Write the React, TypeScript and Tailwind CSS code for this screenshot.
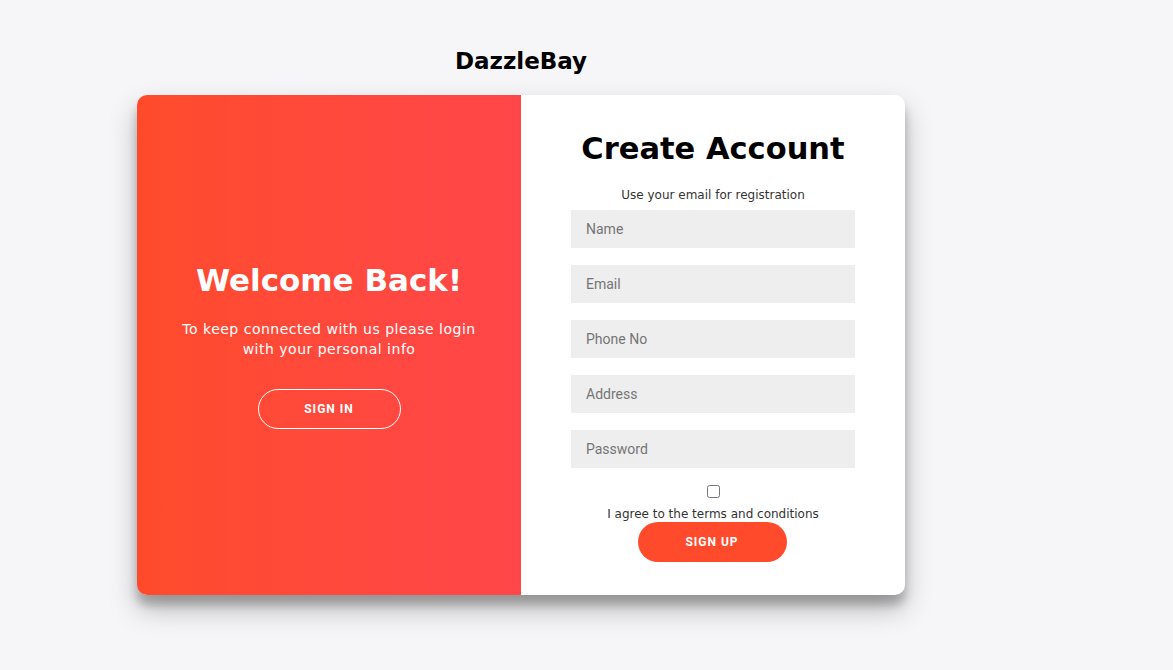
import { useState } from "react";

const fields = ["Name", "Email", "Phone No", "Address", "Password"];

export default function App() {
  const [agree, setAgree] = useState(false);

  return (
    <div className="min-h-[670px] w-full bg-[#f6f5f7] font-['DejaVu_Sans',sans-serif]">
      <div className="ml-[137px] w-[768px] pt-[46px]">
        <h1 className="text-center text-[23px] leading-[30px] font-bold text-black">DazzleBay</h1>

        <div className="mt-[19px] flex h-[500px] overflow-hidden rounded-[10px] bg-white shadow-[0_14px_28px_rgba(0,0,0,0.25),0_10px_10px_rgba(0,0,0,0.22)]">
          {/* Left */}
          <div className="flex w-[384px] flex-col items-center bg-gradient-to-r from-[#ff4b2b] to-[#ff4649] px-8 pt-[165px] text-center text-white">
            <h2 className="text-[31px] leading-[40px] font-bold">Welcome Back!</h2>
            <p className="mt-[19px] text-[14px] leading-[20px] tracking-[0.5px]">
              To keep connected with us please login with your personal info
            </p>
            <button className="mt-[30px] h-[40px] w-[143px] rounded-full border border-white font-['Roboto',sans-serif] text-[12px] font-bold tracking-[1px] text-white uppercase">
              Sign In
            </button>
          </div>

          {/* Right */}
          <div className="flex w-[384px] flex-col items-center pt-[32px]">
            <h2 className="text-[30.5px] leading-[44px] font-bold text-black">Create Account</h2>
            <span className="mt-[16px] text-[12px] leading-[16px] text-[#333]">Use your email for registration</span>
            <div className="mt-[7px] flex flex-col gap-[17px]">
              {fields.map((f) => (
                <input
                  key={f}
                  type={f === "Password" ? "password" : "text"}
                  placeholder={f}
                  className="h-[38px] w-[284px] bg-[#eee] px-[15px] font-['Roboto',sans-serif] text-[14px] text-[#333] outline-none placeholder:text-[#757575]"
                />
              ))}
            </div>
            <input
              type="checkbox"
              checked={agree}
              onChange={() => setAgree(!agree)}
              className="mt-[17px] h-[13px] w-[13px]"
            />
            <label className="mt-[9px] text-[12px] leading-[15px] text-[#333]">I agree to the terms and conditions</label>
            <button className="h-[40px] w-[149px] -translate-x-px rounded-full bg-[#ff4b2b] font-['Roboto',sans-serif] text-[12px] font-bold tracking-[1px] text-white uppercase">
              Sign Up
            </button>
          </div>
        </div>
      </div>
    </div>
  );
}
